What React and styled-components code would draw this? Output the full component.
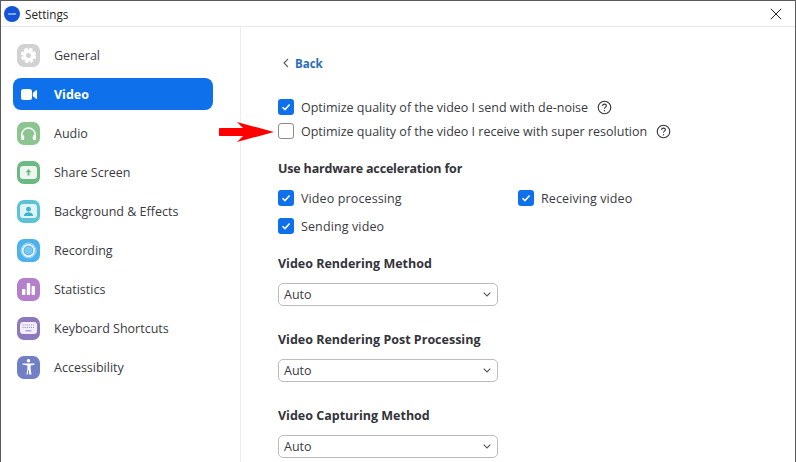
import React from 'react'
import styled, { createGlobalStyle } from 'styled-components'

const Global = createGlobalStyle`
  html, body { margin: 0; padding: 0; background: #fff; }
  body { font-family: "Open Sans", "Noto Sans", sans-serif; color: #2f2f36; }
`

const Win = styled.div`
  width: 796px;
  height: 462px;
  box-sizing: border-box;
  border: 1px solid #5a5a5a;
  border-bottom: 0;
  display: flex;
  flex-direction: column;
  overflow: hidden;
  position: relative;
`

const TitleBar = styled.div`
  height: 25px;
  flex: none;
  border-bottom: 1px solid #e9e9e9;
  display: flex;
  align-items: center;
  padding: 0 13px 0 3px;
  font-size: 11.7px;
  color: #222;
`

const Logo = styled.div`
  width: 16px;
  height: 16px;
  border-radius: 50%;
  background: #1553d6;
  margin-right: 5px;
  display: flex;
  align-items: center;
  justify-content: center;
  color: #cfe0ff;
  font-size: 3px;
  font-weight: 700;
`

const TitleText = styled.span`
  flex: 1;
`

const Body = styled.div`
  flex: 1;
  display: flex;
  min-height: 0;
`

const Sidebar = styled.div`
  width: 240px;
  flex: none;
  box-sizing: border-box;
  border-right: 1px solid #ededed;
  padding: 12px 0 0 12px;
  display: flex;
  flex-direction: column;
  gap: 7px;
`

const NavItem = styled.div`
  width: 200px;
  height: 32px;
  border-radius: 8px;
  display: flex;
  align-items: center;
  padding-left: 4px;
  box-sizing: border-box;
  font-size: 12.5px;
  color: ${({ $active }) => ($active ? '#fff' : '#3a3a42')};
  font-weight: ${({ $active }) => ($active ? 700 : 400)};
  background: ${({ $active }) => ($active ? '#0e71eb' : 'transparent')};
`

const IconTile = styled.div`
  width: 23px;
  height: 23px;
  border-radius: 7px;
  background: ${({ $color }) => $color};
  margin-right: 14px;
  display: flex;
  align-items: center;
  justify-content: center;
  flex: none;
`

const Content = styled.div`
  flex: 1;
  padding: 27px 0 0 37px;
  position: relative;
  font-size: 12.5px;
  color: #3a3a42;
`

const BackLink = styled.div`
  display: flex;
  align-items: center;
  height: 18px;
  margin-left: 5px;
  margin-bottom: 23px;
  gap: 6px;
  color: #2b6cb8;
  font-weight: 700;
  font-size: 11.5px;
`

const CheckRow = styled.div`
  display: flex;
  align-items: center;
  height: 24px;
  gap: 7px;
  white-space: nowrap;
`

const Box = styled.div`
  width: 16px;
  height: 16px;
  box-sizing: border-box;
  border-radius: 3px;
  flex: none;
  display: flex;
  align-items: center;
  justify-content: center;
  background: ${({ $checked }) => ($checked ? '#0e71eb' : '#fff')};
  border: ${({ $checked }) => ($checked ? '0' : '1px solid #8b8b8b')};
`

const Help = styled.svg`
  width: 15px;
  height: 15px;
  margin-left: 2px;
  flex: none;
`

const SectionTitle = styled.div`
  font-weight: 700;
  font-size: 12.5px;
  height: 18px;
  line-height: 18px;
  color: #33333a;
  letter-spacing: ${({ $tight }) => ($tight ? '-0.17px' : '0')};
  margin-top: ${({ $top }) => $top || 0}px;
`

const Grid = styled.div`
  display: grid;
  grid-template-columns: 240px 1fr;
  grid-auto-rows: 28px;
  margin-top: 6px;
  margin-bottom: 15px;
  letter-spacing: 0.12px;
  ${CheckRow} { height: 28px; }
`

const Select = styled.div`
  width: 220px;
  height: 23px;
  box-sizing: border-box;
  border: 1px solid #bdbdbd;
  border-radius: 5px;
  margin-top: 10px;
  margin-bottom: 25px;
  padding: 0 6px 0 5px;
  display: flex;
  align-items: center;
  justify-content: space-between;
  font-size: 12.5px;
`

const Arrow = styled.svg`
  position: absolute;
  left: -22px;
  top: 94px;
  width: 57px;
  height: 22px;
`

const Check = () => (
  <svg width="12" height="12" viewBox="0 0 12 12" fill="none" stroke="#fff" strokeWidth="1.5">
    <path d="M2.5 6.2 5 8.6 9.6 3.4" />
  </svg>
)

const HelpIcon = () => (
  <Help viewBox="0 0 15 15" fill="none" stroke="#33333a">
    <circle cx="7.5" cy="7.5" r="6.3" strokeWidth="1.1" />
    <path d="M5.6 6c0-1.2.9-1.9 1.9-1.9s1.9.7 1.9 1.7c0 1.3-1.9 1.4-1.9 2.9" strokeWidth="1.1" />
    <circle cx="7.5" cy="10.8" r=".7" fill="#33333a" stroke="none" />
  </Help>
)

const Chevron = () => (
  <svg width="8" height="5" viewBox="0 0 8 5" fill="none" stroke="#555" strokeWidth="1.1">
    <path d="M.7.700 4 4 7.300.700" />
  </svg>
)

const icons = {
  general: (
    <svg width="17" height="17" viewBox="0 0 17 17" fill="none" stroke="#fff">
      <circle cx="8.5" cy="8.5" r="4.2" strokeWidth="3.4" />
      <circle cx="8.5" cy="8.5" r="6.5" strokeWidth="2.4" strokeDasharray="3.4 1.7" />
    </svg>
  ),
  video: (
    <svg width="16" height="11" viewBox="0 0 16 11" fill="#fff">
      <rect x="0" y="0" width="11" height="11" rx="2.5" />
      <path d="M11.800 4 15 1.200c.4-.3 1-.1 1 .4v7.800c0 .5-.6.700-1 .4L11.800 7z" />
    </svg>
  ),
  audio: (
    <svg width="17" height="13" viewBox="0 0 17 13" fill="none" stroke="#fff" strokeWidth="1.500">
      <path d="M1.800 10V7.700a6.700 6.700 0 0 1 13.400 0V10" />
      <rect x="1" y="8" width="3.200" height="5" rx="1.500" fill="#fff" stroke="none" />
      <rect x="12.800" y="8" width="3.200" height="5" rx="1.500" fill="#fff" stroke="none" />
    </svg>
  ),
  share: (
    <svg width="17" height="13" viewBox="0 0 17 13">
      <rect x="0" y="0" width="17" height="13" rx="3" fill="#eef7ef" />
      <path d="M8.500 3 5.600 6.300h1.900v3.200h2V6.300h1.900z" fill="#6cb984" />
    </svg>
  ),
  background: (
    <svg width="17" height="14" viewBox="0 0 17 14">
      <rect x="0" y="0" width="17" height="14" rx="3" fill="#dff3f7" />
      <circle cx="8.500" cy="5.200" r="2.400" fill="#3fb3c9" />
      <path d="M3.800 12c.3-2.600 2.200-3.700 4.700-3.700s4.400 1.100 4.700 3.700z" fill="#3fb3c9" />
    </svg>
  ),
  recording: (
    <svg width="17" height="17" viewBox="0 0 17 17" fill="none">
      <circle cx="8.500" cy="8.500" r="7.500" stroke="#a9dbf7" strokeWidth="1" />
      <circle cx="8.500" cy="8.500" r="5.800" stroke="#fff" strokeWidth="1.500" />
      <circle cx="8.500" cy="8.500" r="4" fill="#7cc6f2" />
    </svg>
  ),
  statistics: (
    <svg width="13" height="12" viewBox="0 0 13 12" fill="#fff">
      <rect x="0" y="6" width="3.400" height="6" rx=".8" />
      <rect x="4.800" y="0" width="3.400" height="12" rx=".8" />
      <rect x="9.600" y="3" width="3.400" height="9" rx=".8" />
    </svg>
  ),
  keyboard: (
    <svg width="17" height="12" viewBox="0 0 17 12">
      <rect x="0" y="0" width="17" height="12" rx="3" fill="#f2eff8" />
      <path
        stroke="#9c8cc8"
        strokeWidth="1.100"
        strokeDasharray="1.100 1"
        d="M2.500 3h12M2.500 5.500h12"
      />
      <path stroke="#9c8cc8" strokeWidth="1.100" d="M5.500 8.800h6" />
    </svg>
  ),
  accessibility: (
    <svg width="13" height="16" viewBox="0 0 13 16" fill="#fff">
      <circle cx="6.500" cy="1.800" r="1.800" />
      <path d="M.5 4.400h12v1.400l-3.900.7v3.300l.9 5.700H7.200l-.4-4.500h-.6l-.4 4.500H4.500l.9-5.700V6.500l-3.900-.7L.5 5.800z" />
    </svg>
  ),
}

const navItems = [
  { id: 'general', label: 'General', color: '#d2d2d2' },
  { id: 'video', label: 'Video', active: true },
  { id: 'audio', label: 'Audio', color: '#8cc58f' },
  { id: 'share', label: 'Share Screen', color: '#6cb984' },
  { id: 'background', label: 'Background & Effects', color: '#5cc3d6' },
  { id: 'recording', label: 'Recording', color: '#4db2ec' },
  { id: 'statistics', label: 'Statistics', color: '#b57fcb' },
  { id: 'keyboard', label: 'Keyboard Shortcuts', color: '#8c78bd' },
  { id: 'accessibility', label: 'Accessibility', color: '#717fc6' },
]

const selects = ['Video Rendering Method', 'Video Rendering Post Processing', 'Video Capturing Method']

const Option = ({ checked, children }) => (
  <CheckRow>
    <Box $checked={checked}>{checked && <Check />}</Box>
    {children}
  </CheckRow>
)

export default function App() {
  return (
    <Win>
      <Global />
      <TitleBar>
        <Logo>zoom</Logo>
        <TitleText>Settings</TitleText>
        <svg width="12" height="12" viewBox="0 0 12 12" stroke="#222" strokeWidth="1">
          <path d="M.8.800l10.400 10.400M11.200.800.800 11.200" />
        </svg>
      </TitleBar>
      <Body>
        <Sidebar>
          {navItems.map(item => (
            <NavItem key={item.id} $active={item.active}>
              <IconTile $color={item.color || 'transparent'}>{icons[item.id]}</IconTile>
              {item.label}
            </NavItem>
          ))}
        </Sidebar>
        <Content>
          <BackLink>
            <svg width="6" height="10" viewBox="0 0 6 10" fill="none" stroke="#666" strokeWidth="1.200">
              <path d="M5 1 1 5l4 4" />
            </svg>
            Back
          </BackLink>
          <Arrow viewBox="0 0 57 22">
            <path d="M2 7h22L18 1l37 10-37 10 6-6H2a4 4 0 0 1 0-8z" fill="#f00" />
          </Arrow>
          <Option checked>
            Optimize quality of the video I send with de-noise <HelpIcon />
          </Option>
          <Option>
            Optimize quality of the video I receive with super resolution <HelpIcon />
          </Option>
          <SectionTitle $tight $top={17}>Use hardware acceleration for</SectionTitle>
          <Grid>
            <Option checked>Video processing</Option>
            <Option checked>Receiving video</Option>
            <Option checked>Sending video</Option>
          </Grid>
          {selects.map(label => (
            <div key={label}>
              <SectionTitle>{label}</SectionTitle>
              <Select>
                Auto
                <Chevron />
              </Select>
            </div>
          ))}
        </Content>
      </Body>
    </Win>
  )
}
